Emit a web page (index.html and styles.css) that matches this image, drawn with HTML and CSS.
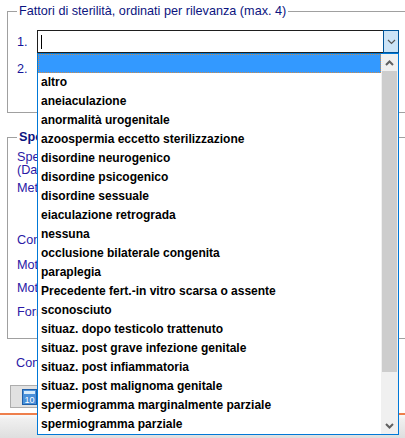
FILE: index.html
```html
<!DOCTYPE html>
<html lang="it">

<head>
    <meta charset="UTF-8">
    <meta name="viewport" content="width=device-width, initial-scale=1.0">
    <title>Fattori di sterilità</title>
    <link rel="stylesheet" href="styles.css">
</head>

<body>

    <div class="page">
        <fieldset class="group group-factors">
            <legend>Fattori di sterilità, ordinati per rilevanza (max. 4)</legend>

            <div class="row">
                <span class="num">1.</span>
                <div class="combo open">
                    <span class="caret"></span>
                    <span class="combo-btn">
                        <svg width="9" height="6" viewBox="0 0 9 6"><polyline points="1,1 4.5,4.5 8,1" fill="none" stroke="#555" stroke-width="1.2"/></svg>
                    </span>
                </div>
            </div>
            <div class="row">
                <span class="num">2.</span>
                <div class="combo">
                    <span class="combo-btn">
                        <svg width="9" height="6" viewBox="0 0 9 6"><polyline points="1,1 4.5,4.5 8,1" fill="none" stroke="#555" stroke-width="1.2"/></svg>
                    </span>
                </div>
            </div>
        </fieldset>

        <fieldset class="group group-sperm">
            <legend>Spermiogramma</legend>
            <div class="field two-line">Spermiogramma del partner<br>(Data dell'esame)</div>
            <div class="field f-met">Metodo di raccolta</div>
            <div class="field f-con">Concentrazione (mil/ml)</div>
            <div class="field f-mot1">Motilità progressiva (%)</div>
            <div class="field f-mot2">Motilità totale (%)</div>
            <div class="field f-for">Forme normali (%)</div>
        </fieldset>

        <div class="field f-conf">Conferma dati inseriti</div>

        <button class="calc-btn">
            <svg width="15" height="16" viewBox="0 0 15 16">
                <rect x="0.5" y="0.5" width="14" height="15" fill="#4a90d9" stroke="#1f5fa8"/>
                <rect x="2" y="2" width="11" height="3" fill="#d8ecfb"/>
                <text x="7.5" y="14" font-family="Liberation Sans, sans-serif" font-size="9" fill="#fff" text-anchor="middle">10</text>
            </svg>
            <span>Calcola</span>
        </button>
    </div>

    <div class="taskbar"></div>

    <!-- opened list of combo 1 -->
    <div class="droplist">
        <div class="items">
            <div class="item selected"></div>
            <div class="item">altro</div>
            <div class="item">aneiaculazione</div>
            <div class="item">anormalità urogenitale</div>
            <div class="item">azoospermia eccetto sterilizzazione</div>
            <div class="item">disordine neurogenico</div>
            <div class="item">disordine psicogenico</div>
            <div class="item">disordine sessuale</div>
            <div class="item">eiaculazione retrograda</div>
            <div class="item">nessuna</div>
            <div class="item">occlusione bilaterale congenita</div>
            <div class="item">paraplegia</div>
            <div class="item">Precedente fert.-in vitro scarsa o assente</div>
            <div class="item">sconosciuto</div>
            <div class="item">situaz. dopo testicolo trattenuto</div>
            <div class="item">situaz. post grave infezione genitale</div>
            <div class="item">situaz. post infiammatoria</div>
            <div class="item">situaz. post malignoma genitale</div>
            <div class="item">spermiogramma marginalmente parziale</div>
            <div class="item">spermiogramma parziale</div>
        </div>
        <div class="scrollbar">
            <div class="sb-arrow">
                <svg width="9" height="6" viewBox="0 0 9 6"><polyline points="1,5 4.5,1.5 8,5" fill="none" stroke="#606060" stroke-width="2"/></svg>
            </div>
            <div class="sb-thumb"></div>
            <div class="sb-track"></div>
            <div class="sb-arrow">
                <svg width="9" height="6" viewBox="0 0 9 6"><polyline points="1,1 4.5,4.5 8,1" fill="none" stroke="#606060" stroke-width="2"/></svg>
            </div>
        </div>
    </div>

</body>

</html>
```

FILE: styles.css
```css
body {
    margin: 0;
    padding: 0;
    width: 405px;
    height: 438px;
    overflow: hidden;
    position: relative;
    background-color: #fff;
    font-family: "Liberation Sans", Arial, sans-serif;
    font-size: 12.67px;
}

.page {
    width: 460px;
    padding: 4px 0 0 7px;
}

.group {
    margin: 0;
    padding: 0 0 0 9px;
    border: 1px solid #a0a0a0;
    min-width: 0;
}

.group legend {
    padding: 0 2px;
    line-height: 15px;
    color: #0c1480;
}

.group-factors {
    padding-top: 11px;
    padding-bottom: 32px;
}

.row {
    display: flex;
    align-items: center;
    height: 23px;
}

.row + .row {
    margin-top: 4px;
}

.num {
    width: 20px;
    color: #14149a;
}

.combo {
    box-sizing: border-box;
    width: 362px;
    height: 23px;
    border: 1px solid #7a7a7a;
    background: #fff;
    display: flex;
    align-items: center;
    padding-left: 3px;
}

.combo.open {
    border-color: #1e1e1e;
}

.caret {
    width: 1px;
    height: 14px;
    background: #000;
}

.combo-btn {
    margin-left: auto;
    width: 16px;
    height: 23px;
    margin-right: -1px;
    box-sizing: border-box;
    display: flex;
    align-items: center;
    justify-content: center;
    border: 1px solid transparent;
}

.combo.open .combo-btn {
    background: #cce4f7;
    border-color: #005499;
}

.group-sperm {
    margin-top: 17px;
    padding-top: 6px;
    padding-bottom: 19px;
}

.group-sperm legend {
    font-weight: bold;
    color: #0c1480;
}

.field {
    line-height: 13px;
    color: #2b1aa6;
    white-space: nowrap;
}

.f-met { margin-top: 5px; }
.f-con { margin-top: 39px; }
.f-mot1 { margin-top: 12px; }
.f-mot2 { margin-top: 10px; }
.f-for { margin-top: 11px; }

.f-conf {
    margin: 18px 0 0 9px;
}

.calc-btn {
    margin: 15px 0 0 3px;
    height: 23px;
    width: 120px;
    padding: 0 0 0 11px;
    display: flex;
    align-items: center;
    gap: 6px;
    background: #e1e1e1;
    border: 1px solid #adadad;
    font-family: inherit;
    font-size: 12.67px;
}

.taskbar {
    margin-top: 5px;
    height: 40px;
    border-top: 2px solid #ee7f4c;
    background: linear-gradient(#fafafa, #f0f0f0 4px, #cfcfcf);
}

/* opened dropdown list */
.droplist {
    position: absolute;
    left: 37px;
    top: 53px;
    width: 362px;
    height: 382px;
    box-sizing: border-box;
    border: 1px solid #0078d7;
    background: #fff;
    display: flex;
}

.items {
    width: 343px;
}

.item {
    height: 19px;
    line-height: 19px;
    padding-left: 3px;
    font-family: "Liberation Sans", Arial, sans-serif;
    font-size: 12px;
    font-weight: bold;
    color: #000;
    white-space: nowrap;
}

.item.selected {
    box-sizing: border-box;
    background: #3399ff;
    border: 1px dotted #c98b4e;
}

.scrollbar {
    width: 17px;
    display: flex;
    flex-direction: column;
    background: #f0f0f0;
}

.sb-arrow {
    height: 17px;
    display: flex;
    align-items: center;
    justify-content: center;
}

.sb-thumb {
    height: 301px;
    margin: 0 1px;
    background: #cdcdcd;
}

.sb-track {
    flex: 1;
}
```
